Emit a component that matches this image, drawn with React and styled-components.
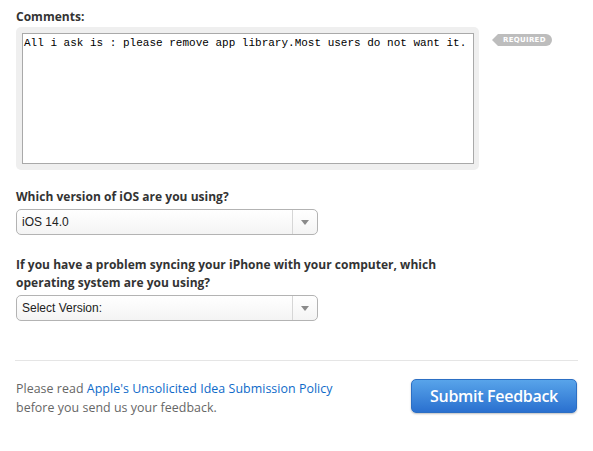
import React from "react";
import styled, { createGlobalStyle } from "styled-components";

const Global = createGlobalStyle`
  html, body { margin: 0; padding: 0; background: #fff; }
  body { font-family: "Open Sans", "Liberation Sans", sans-serif; }
`;

const Page = styled.div`
  width: 593px;
  height: 451px;
  box-sizing: border-box;
  padding: 8px 15px 0 16px;
  display: flex;
  flex-direction: column;
`;

const Label = styled.div`
  font-family: "Open Sans", sans-serif;
  font-weight: 700;
  font-size: 12px;
  line-height: 18px;
  color: #333;
  letter-spacing: 0.02px;
  margin-top: ${(p) => p.$mt || 0}px;
  margin-bottom: ${(p) => p.$mb || 0}px;
`;

const FieldRow = styled.div`
  display: flex;
  align-items: flex-start;
`;

const Well = styled.div`
  width: 463px;
  height: 143px;
  box-sizing: border-box;
  padding: 6px;
  background: #efefef;
  border-radius: 5px;
`;

const TextArea = styled.div`
  box-sizing: border-box;
  width: 452px;
  height: 131px;
  border: 1px solid #a9a9a9;
  background: #fff;
  font-family: "Liberation Mono", monospace;
  font-size: 11px;
  line-height: 14px;
  color: #000;
  padding: 2px 0 0 1px;
  white-space: pre;
`;

const Badge = styled.div`
  position: relative;
  margin-left: 19px;
  margin-top: 7px;
  height: 12px;
  padding: 0 6px 0 5px;
  background: #bdbdbd;
  border-radius: 0 6px 6px 0;
  color: #fff;
  font-family: "DejaVu Sans", sans-serif;
  font-weight: 700;
  font-size: 7px;
  line-height: 12px;
  letter-spacing: 0.3px;
  &::before {
    content: "";
    position: absolute;
    left: -6px;
    top: 0;
    border-top: 6px solid transparent;
    border-bottom: 6px solid transparent;
    border-right: 6px solid #bdbdbd;
  }
`;

const Select = styled.div`
  width: 302px;
  height: 26px;
  box-sizing: border-box;
  border: 1px solid #b3b3b3;
  border-radius: 5px;
  background: linear-gradient(#ffffff, #f4f4f4);
  display: flex;
  align-items: stretch;
  font-family: "Liberation Sans", Arial, sans-serif;
  font-size: 12px;
  color: #222;
`;

const SelectText = styled.div`
  flex: 1;
  display: flex;
  align-items: center;
  padding-left: 5px;
`;

const Arrow = styled.div`
  width: 24px;
  border-left: 1px solid #d6d6d6;
  display: flex;
  align-items: center;
  justify-content: center;
  &::after {
    content: "";
    border-left: 4px solid transparent;
    border-right: 4px solid transparent;
    border-top: 5px solid #8a8a8a;
    margin-top: 1px;
  }
`;

const Divider = styled.hr`
  border: 0;
  border-top: 1px solid #e5e5e5;
  margin: 39px 0 0 0;
  width: 563px;
  margin-left: -1px;
`;

const Footer = styled.div`
  display: flex;
  justify-content: space-between;
  align-items: flex-start;
  margin-top: 18px;
`;

const Note = styled.p`
  margin: 0;
  font-family: "Open Sans", sans-serif;
  font-size: 12.4px;
  line-height: 19px;
  color: #666;
  letter-spacing: 0.05px;
  a { color: #0e6ac9; text-decoration: none; }
`;

const Button = styled.button`
  width: 166px;
  height: 34px;
  margin-right: 1px;
  border: 1px solid #2c6fc4;
  border-radius: 5px;
  background: linear-gradient(#58a4ea, #2a70cf);
  box-shadow: 0 1px 2px rgba(0, 0, 0, 0.25);
  color: #fff;
  font-family: "Open Sans", sans-serif;
  font-weight: 600;
  font-size: 16px;
  letter-spacing: -0.3px;
  padding: 0;
`;

export default function App() {
  return (
    <>
      <Global />
      <Page>
        <Label $mb={1}>Comments:</Label>
        <FieldRow>
          <Well>
            <TextArea>All i ask is : please remove app library.Most users do not want it.</TextArea>
          </Well>
          <Badge>REQUIRED</Badge>
        </FieldRow>
        <Label $mt={18} $mb={3}>Which version of iOS are you using?</Label>
        <Select>
          <SelectText>iOS 14.0</SelectText>
          <Arrow />
        </Select>
        <Label $mt={21} $mb={3}>
          If you have a problem syncing your iPhone with your computer, which
          <br />
          operating system are you using?
        </Label>
        <Select>
          <SelectText>Select Version:</SelectText>
          <Arrow />
        </Select>
        <Divider />
        <Footer>
          <Note>
            Please read <a href="#">Apple's Unsolicited Idea Submission Policy</a>
            <br />
            before you send us your feedback.
          </Note>
          <Button>Submit Feedback</Button>
        </Footer>
      </Page>
    </>
  );
}
